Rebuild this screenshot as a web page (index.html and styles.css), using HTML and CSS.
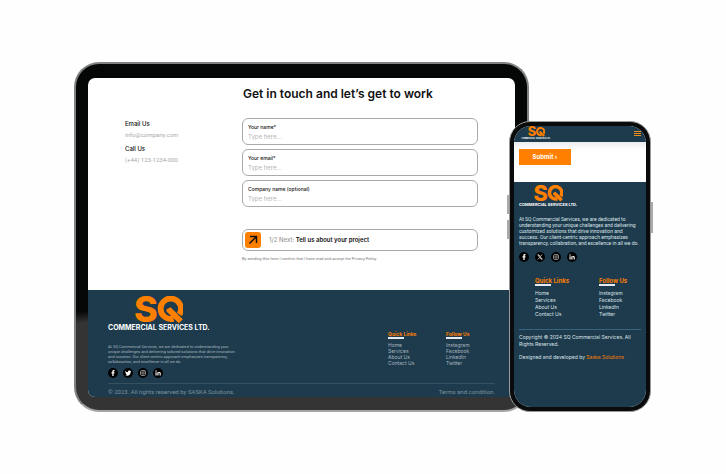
FILE: index.html
```html
<!DOCTYPE html>
<html lang="en">
<head>
<meta charset="utf-8">
<meta name="viewport" content="width=device-width, initial-scale=1">
<title>SQ Commercial Services Ltd.</title>
<link rel="stylesheet" href="styles.css">
</head>
<body>
<svg class="defs" aria-hidden="true">
  <symbol id="ring" viewBox="0 0 48 28">
    <path d="M38.500 22.600A10.200 10.200 0 1 1 44.300 18.400" fill="none" stroke="#ff7f00" stroke-width="5.800"/>
    <path d="M31.500 13.200L35.600 11.200L47.800 23.200L43.800 27.200L31.500 15.600Z" fill="#ff7f00"/>
  </symbol>
  <symbol id="facebook" viewBox="0 0 20 20">
    <circle cx="10" cy="10" r="10"/>
    <path d="M8.700 16V11H7V8.600H8.700V7.200C8.700 5.100 9.700 4.200 11.500 4.200H13V6.600H12C11.300 6.600 11.200 7 11.200 7.500V8.600H13L12.700 11H11.200V16Z" fill="#fff"/>
  </symbol>
  <symbol id="bird" viewBox="0 0 20 20">
    <circle cx="10" cy="10" r="10"/>
    <path d="M4.800 6C6.200 7.600 8 8.500 10 8.600C9.600 6.300 11 5 12.600 5C13.400 5 14.100 5.300 14.600 5.900L16.200 5.300L15.500 6.900L16.500 6.700L15.300 8C15.400 12.500 12.200 15.400 8.500 15.400C7 15.400 5.600 15 4.500 14.200C5.800 14.300 6.900 14 7.800 13.300C6.700 13.200 6 12.600 5.700 11.700H6.700C5.500 11.200 4.800 10.400 4.800 9.200L5.700 9.400C4.700 8.500 4.200 7.300 4.800 6Z" fill="#fff"/>
  </symbol>
  <symbol id="cross" viewBox="0 0 20 20">
    <circle cx="10" cy="10" r="10"/>
    <path d="M5.500 5.500H7.700L14.500 14.500H12.300ZM14 5.300L10.800 9M9.200 11L6 14.700" fill="none" stroke="#fff" stroke-width="1.400"/>
  </symbol>
  <symbol id="camera" viewBox="0 0 20 20">
    <circle cx="10" cy="10" r="10"/>
    <rect x="5" y="5" width="10" height="10" rx="3" fill="none" stroke="#ddd" stroke-width="1.200"/>
    <circle cx="10" cy="10" r="2.400" fill="none" stroke="#ddd" stroke-width="1.200"/>
    <circle cx="13" cy="7" r=".7" fill="#ddd"/>
  </symbol>
  <symbol id="linkedin" viewBox="0 0 20 20">
    <circle cx="10" cy="10" r="10"/>
    <path d="M5 8.300H7.200V15H5ZM8.700 8.300H10.800V9.200C11.300 8.500 12 8.100 13 8.100C14.800 8.100 15.500 9.300 15.500 11.200V15H13.300V11.600C13.300 10.600 13 10 12.200 10C11.300 10 10.900 10.600 10.900 11.600V15H8.700Z" fill="#fff"/>
    <circle cx="6.100" cy="6" r="1.300" fill="#fff"/>
  </symbol>
</svg>

<main class="stage">
  <section class="tablet">
    <div class="tablet-screen">
      <div class="contact">
        <h1>Get in touch and let’s get to work</h1>
        <dl class="details">
          <dt>Email Us</dt><dd>info@company.com</dd>
          <dt>Call Us</dt><dd>(+44) 123-1234-000</dd>
        </dl>
        <form class="form">
          <div class="field"><label for="name">Your name*</label><input id="name" type="text" placeholder="Type here..."></div>
          <div class="field"><label for="email">Your email*</label><input id="email" type="email" placeholder="Type here..."></div>
          <div class="field"><label for="company">Company name (optional)</label><input id="company" type="text" placeholder="Type here..."></div>
          <button class="next" type="button">
            <span class="arrow"><svg viewBox="0 0 16 16"><path d="M4.500 11.500L11.500 4.500M5 4.500H11.500V11" fill="none" stroke="#111" stroke-width="1.500"/></svg></span>
            <span><span class="step">1/2 Next:</span> Tell us about your project</span>
          </button>
          <p class="consent">By sending this form I confirm that I have read and accept the Privacy Policy</p>
        </form>
      </div>
      <footer class="wide-footer">
        <div class="brand">
          <svg class="mark" viewBox="0 0 48 28"><text class="mark-letter" x="-1" y="26">S</text><use href="#ring" width="48" height="28"/></svg>
          <strong>COMMERCIAL SERVICES LTD.</strong>
        </div>
        <div class="columns">
          <div class="about">
            <p>At SQ Commercial Services, we are dedicated to understanding your<br>unique challenges and delivering tailored solutions that drive innovation<br>and success. Our client-centric approach emphasizes transparency,<br>collaboration, and excellence in all we do.</p>
            <div class="social">
              <a href="#" aria-label="Facebook"><svg><use href="#facebook"/></svg></a>
              <a href="#" aria-label="Twitter"><svg><use href="#bird"/></svg></a>
              <a href="#" aria-label="Instagram"><svg><use href="#camera"/></svg></a>
              <a href="#" aria-label="LinkedIn"><svg><use href="#linkedin"/></svg></a>
            </div>
          </div>
          <nav class="links">
            <div><h2>Quick Links</h2><a href="#">Home</a><a href="#">Services</a><a href="#">About Us</a><a href="#">Contact Us</a></div>
            <div><h2>Follow Us</h2><a href="#">Instagram</a><a href="#">Facebook</a><a href="#">LinkedIn</a><a href="#">Twitter</a></div>
          </nav>
        </div>
        <div class="legal"><span>© 2023. All rights reserved by SASKA Solutions.</span><a href="#">Terms and condition.</a></div>
      </footer>
    </div>
  </section>

  <section class="phone">
    <div class="phone-screen">
      <header class="topbar">
        <div class="brand"><svg class="mark" viewBox="0 0 48 28"><text class="mark-letter" x="-1" y="26">S</text><use href="#ring" width="48" height="28"/></svg><strong>COMMERCIAL SERVICES LTD.</strong></div>
        <button class="menu" type="button" aria-label="Menu"><svg viewBox="0 0 7 6"><path d="M0 .5H7M0 2.500H7M0 4.500H7" stroke="#f08a1c"/></svg></button>
      </header>
      <div class="submit-row"><button class="submit" type="button">Submit ›</button></div>
      <footer class="narrow-footer">
        <div class="brand"><svg class="mark" viewBox="0 0 48 28"><text class="mark-letter" x="-1" y="26">S</text><use href="#ring" width="48" height="28"/></svg><strong>COMMERCIAL SERVICES LTD.</strong></div>
        <p class="intro">At SQ Commercial Services, we are dedicated to<br>understanding your unique challenges and delivering<br>customized solutions that drive innovation and<br>success. Our client-centric approach emphasizes<br>transparency, collabration, and excellence in all we do.</p>
        <div class="social">
          <a href="#" aria-label="Facebook"><svg><use href="#facebook"/></svg></a>
          <a href="#" aria-label="X"><svg><use href="#cross"/></svg></a>
          <a href="#" aria-label="Instagram"><svg><use href="#camera"/></svg></a>
          <a href="#" aria-label="LinkedIn"><svg><use href="#linkedin"/></svg></a>
        </div>
        <nav class="links">
          <div><h2>Quick Links</h2><a href="#">Home</a><a href="#">Services</a><a href="#">About Us</a><a href="#">Contact Us</a></div>
          <div><h2>Follow Us</h2><a href="#">Instagram</a><a href="#">Facebook</a><a href="#">LinkedIn</a><a href="#">Twitter</a></div>
        </nav>
        <div class="copyright">
          <p>Copyright © 2024 SQ Commercial Services. All<br>Rights Reserved.</p>
          <p>Designed and developed by <a href="#">Saska Solutions</a></p>
        </div>
      </footer>
    </div>
  </section>
</main>
</body>
</html>
```
FILE: styles.css
```css
:root {
  --navy: #1d3b4d;
  --orange: #ff7f00;
  --small: Roboto, "Liberation Sans", sans-serif;
}
* { box-sizing: border-box; }
body {
  margin: 0;
  background: #fefefe;
  color: #111;
  font-family: Inter, "Liberation Sans", sans-serif;
}
h1, h2, p, dl, dd { margin: 0; }
a { color: inherit; text-decoration: none; }
button, input { font: inherit; color: inherit; padding: 0; border: 0; background: none; }
svg { display: block; }
.defs { position: absolute; width: 0; height: 0; }
.mark-letter { font: 800 36px Inter, sans-serif; fill: var(--orange); }

.stage {
  display: flex;
  align-items: flex-end;
  justify-content: center;
  padding: 62px 75px 0 74px;
}

/* Tablet */
.tablet {
  position: relative;
  flex: 1;
  padding: 14px 12px 13px;
  border: 2px solid #808284;
  border-bottom-color: #a5a5a5;
  border-radius: 25px;
  background: linear-gradient(174deg, #050606 63%, #343434 66%);
}
.tablet::after {
  content: "";
  position: absolute;
  right: 32px;
  bottom: -3px;
  width: 36px;
  height: 1px;
  background: linear-gradient(90deg, #888 17px, transparent 17px 19px, #888 19px);
}
.tablet-screen { overflow: hidden; border-radius: 7px; background: #fff; }
.contact {
  display: grid;
  grid-template-columns: 117px 1fr;
  padding: 8px 37px 28px;
}
h1 {
  grid-column: 2;
  margin-bottom: 16px;
  padding-left: 1px;
  font-size: 12px;
  line-height: 16px;
  font-weight: 600;
}
.details { grid-column: 1; padding-top: 2px; font-size: 6px; line-height: 8px; }
.details dt { font-weight: 500; }
.details dd { margin: 3px 0 6px; color: #aaa; font-family: var(--small); }
.form { display: flex; flex-direction: column; gap: 4px; }
.field {
  display: flex;
  flex-direction: column;
  gap: 2px;
  padding: 4px 5px 3px;
  border: 1px solid #aaa;
  border-radius: 6px;
  font-size: 6px;
  line-height: 8px;
}
.field label { font-size: 5px; font-weight: 500; }
.field input { width: 100%; height: 8px; outline: 0; }
.field input::placeholder { color: #b5b5b5; opacity: 1; }
.next {
  display: flex;
  align-items: center;
  gap: 8px;
  margin-top: 18px;
  padding: 2px;
  border: 1px solid #aaa;
  border-radius: 6px;
  font-size: 6px;
  line-height: 8px;
  font-weight: 600;
}
.arrow { width: 16px; height: 16px; border-radius: 3px; background: var(--orange); }
.step { color: #999; font-weight: 500; }
.consent { font-family: var(--small); font-size: 4px; line-height: 7px; color: #777; }

.brand {
  display: flex;
  flex-direction: column;
  align-items: center;
  width: max-content;
  color: #fff;
}
.mark { width: 48px; height: 28px; overflow: visible; }
.brand strong { font-size: 7px; line-height: 8px; font-weight: 700; }
.social { display: flex; }
.social svg { width: 10px; height: 10px; }
.links h2 { color: var(--orange); font-size: 5px; line-height: 5px; font-weight: 700; }
.links h2::after { content: ""; display: block; width: 16px; height: 2px; background: #e4eaf0; }
.links a { display: block; }

.wide-footer { padding: 6px 20px 0; background: var(--navy); color: #a9b5bd; }
.columns { display: flex; justify-content: space-between; padding-bottom: 5px; }
.about { padding-top: 12px; font-family: var(--small); font-size: 4px; line-height: 5px; }
.wide-footer .social { gap: 5px; padding-top: 4px; }
.wide-footer .links {
  display: grid;
  grid-template-columns: 58px 49px;
  font-size: 5px;
  line-height: 6px;
}
.wide-footer h2 { margin-bottom: 3px; }
.legal {
  display: flex;
  justify-content: space-between;
  padding: 4px 0 1px;
  border-top: 1px solid #35505f;
  color: #7f909b;
  font-family: var(--small);
  font-size: 6px;
  line-height: 8px;
}

/* Phone */
.phone {
  position: relative;
  flex: 0 0 142px;
  margin-left: -20px;
  padding: 4px;
  border: 1px solid #999;
  border-radius: 21px;
  background: #090b0c;
}
.phone::before, .phone::after { content: ""; position: absolute; width: 2px; }
.phone::before {
  left: -3px;
  top: 73px;
  height: 44px;
  background: linear-gradient(#aaa 19px, transparent 19px 25px, #aaa 25px);
}
.phone::after { right: -3px; top: 80px; height: 31px; background: #aaa; }
.phone-screen { overflow: hidden; border-radius: 17px; background: #fff; }
.topbar {
  display: flex;
  align-items: center;
  justify-content: space-between;
  padding: 1px 5px 2px;
  background: var(--navy);
}
.topbar .brand { min-width: 34px; }
.topbar .mark { width: 17px; height: 10px; }
.topbar strong { font-size: 2px; line-height: 3px; }
.menu { line-height: 0; }
.menu svg { width: 7px; height: 6px; margin-top: 1px; }
.submit-row { padding: 7px 5px 17px; background: linear-gradient(#ececee, #fff 8px); }
.submit {
  display: block;
  width: 52px;
  background: var(--orange);
  color: #fff;
  font-size: 6px;
  line-height: 16px;
  font-weight: 700;
}
.narrow-footer {
  padding: 3px 5px 46px;
  background: var(--navy);
  color: #dbe3e8;
  font-size: 5px;
  line-height: 6px;
}
.narrow-footer .mark { width: 29px; height: 17px; }
.narrow-footer strong { font-size: 4px; line-height: 6px; }
.intro { padding-top: 8px; font-family: var(--small); white-space: nowrap; }
.narrow-footer .social { gap: 6px; padding-top: 6px; }
.narrow-footer .links {
  display: grid;
  grid-template-columns: 64px 1fr;
  padding: 16px 0 11px 16px;
  line-height: 7px;
}
.narrow-footer h2 { margin-bottom: 4px; font-size: 6px; line-height: 6px; }
.copyright {
  display: grid;
  gap: 6px;
  padding-top: 4px;
  border-top: 1px solid #386480;
  line-height: 7px;
  white-space: nowrap;
}
.copyright a { color: var(--orange); }
```
